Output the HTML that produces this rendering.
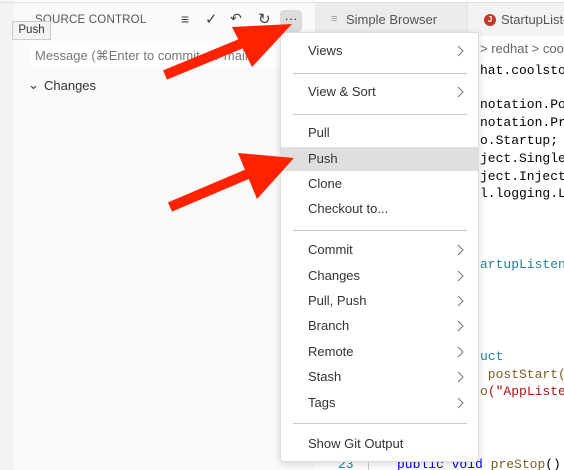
<!DOCTYPE html>
<html><head><meta charset="utf-8"><style>
*{margin:0;padding:0;box-sizing:border-box}
html,body{width:564px;height:470px;overflow:hidden}
body{background:#fff;font-family:"Liberation Sans",sans-serif;position:relative}
.abs{position:absolute;white-space:nowrap}
.mono{font-family:"Liberation Mono",monospace;font-size:13px;color:#000}
.mi{position:absolute;left:0;width:197px;height:24px;line-height:24px;padding-left:27px;font-size:13px;color:#333}
.mi svg{position:absolute;right:14px;top:6px}
.sep{position:absolute;left:12px;width:174px;height:1px;background:#ccc}
</style></head><body>
<svg width="0" height="0" style="position:absolute"><defs><symbol id="ch" viewBox="0 0 8 12"><polyline points="2,1 7,6 2,11" fill="none" stroke="#777" stroke-width="1"/></symbol></defs></svg>
<div class="abs" style="left:0;top:0;width:14px;height:470px;background:#f3f3f3"></div>
<div class="abs" style="left:14px;top:0;width:301px;height:470px;background:#fafafa"></div>
<div class="abs" style="left:0;top:2px;width:564px;height:1px;background:#e0e0e0"></div>
<div class="abs" style="left:35px;top:14px;font-size:11.5px;color:#555;letter-spacing:.2px">SOURCE CONTROL</div>
<div class="abs" style="left:181px;top:11px;font-size:14px;color:#444">&#8801;</div>
<div class="abs" style="left:205px;top:10px;font-size:15px;color:#444">&#10003;</div>
<div class="abs" style="left:230px;top:10px;font-size:14px;color:#444">&#8630;</div>
<div class="abs" style="left:258px;top:10px;font-size:15px;color:#444">&#8635;</div>
<div class="abs" style="left:280px;top:10px;width:22px;height:22px;background:#dcdcdc;border-radius:4px;font-size:13px;color:#333;text-align:center;line-height:18px">&middot;&middot;&middot;</div>
<div class="abs" style="left:12px;top:21px;width:39px;height:19px;background:#f3f3f3;border:1px solid #ccc;font-size:11.5px;color:#333;line-height:17px;text-align:center">Push</div>
<div class="abs" style="left:31px;top:43px;width:250px;height:25px;background:#fff"></div>
<div class="abs" style="left:35px;top:48px;font-size:13px;color:#777">Message (&#8984;Enter to commit on 'main')</div>
<div class="abs" style="left:28px;top:77px;font-size:13px;color:#333">&#8964;</div>
<div class="abs" style="left:44px;top:78px;font-size:13px;color:#333">Changes</div>
<div class="abs" style="left:315px;top:3px;width:249px;height:33px;background:#f3f3f3"></div>
<div class="abs" style="left:315px;top:3px;width:153px;height:33px;background:#ececec;border-right:1px solid #e0e0e0"></div>
<div class="abs" style="left:331px;top:13px;font-size:11px;color:#999">&#8801;</div>
<div class="abs" style="left:346px;top:12px;font-size:13px;color:#555">Simple Browser</div>
<div class="abs" style="left:484px;top:14px;width:12px;height:12px;border-radius:50%;background:#c0392b;color:#fff;font-size:8px;text-align:center;line-height:12px;font-weight:bold">J</div>
<div class="abs" style="left:501px;top:12px;font-size:13px;color:#555">StartupListener</div>
<div class="abs" style="left:480px;top:41px;font-size:13px;color:#666">&gt; redhat &gt; coolstore</div>
<div class="abs mono" style="left:480px;top:63px">hat.coolstore</div>
<div class="abs mono" style="left:480px;top:97px">notation.PostConstruct;</div>
<div class="abs mono" style="left:480px;top:115px">notation.PreDestroy;</div>
<div class="abs mono" style="left:480px;top:133px">o.Startup;</div>
<div class="abs mono" style="left:480px;top:151px">ject.Singleton;</div>
<div class="abs mono" style="left:480px;top:169px">ject.Inject;</div>
<div class="abs mono" style="left:480px;top:186px">l.logging.Logger;</div>
<div class="abs mono" style="left:480px;top:257px;color:#267f99">artupListener</div>
<div class="abs mono" style="left:480px;top:349px;color:#267f99">uct</div>
<div class="abs mono" style="left:480px;top:367px;color:#795e26">&nbsp;postStart()</div>
<div class="abs mono" style="left:480px;top:384px;color:#a31515"><span style="color:#795e26">o</span>("AppListener</div>
<div class="abs mono" style="left:338px;top:457px;color:#237893">23</div>
<div class="abs" style="left:368px;top:455px;width:1px;height:15px;background:#ccc"></div>
<div class="abs mono" style="left:397px;top:457px"><span style="color:#0000ff">public void</span> <span style="color:#795e26">preStop</span>() {</div>
<div class="abs" style="left:280px;top:32px;width:199px;height:430px;background:#fff;border:1px solid #ddd;box-shadow:0 2px 8px rgba(0,0,0,.15);border-radius:0 0 4px 4px">
 <div class="mi" style="top:6px">Views<svg width="8" height="12"><use href="#ch"/></svg></div>
 <div class="sep" style="top:40px"></div>
 <div class="mi" style="top:47px">View &amp; Sort<svg width="8" height="12"><use href="#ch"/></svg></div>
 <div class="sep" style="top:81px"></div>
 <div class="mi" style="top:88px">Pull</div>
 <div class="mi" style="top:114px;background:#e1dfdd">Push</div>
 <div class="mi" style="top:139px">Clone</div>
 <div class="mi" style="top:164px">Checkout to...</div>
 <div class="sep" style="top:197px"></div>
 <div class="mi" style="top:205px">Commit<svg width="8" height="12"><use href="#ch"/></svg></div>
 <div class="mi" style="top:231px">Changes<svg width="8" height="12"><use href="#ch"/></svg></div>
 <div class="mi" style="top:256px">Pull, Push<svg width="8" height="12"><use href="#ch"/></svg></div>
 <div class="mi" style="top:281px">Branch<svg width="8" height="12"><use href="#ch"/></svg></div>
 <div class="mi" style="top:307px">Remote<svg width="8" height="12"><use href="#ch"/></svg></div>
 <div class="mi" style="top:332px">Stash<svg width="8" height="12"><use href="#ch"/></svg></div>
 <div class="mi" style="top:358px">Tags<svg width="8" height="12"><use href="#ch"/></svg></div>
 <div class="sep" style="top:390px"></div>
 <div class="mi" style="top:399px">Show Git Output</div>
</div>
<svg class="abs" style="left:0;top:0" width="564" height="470">
 <line x1="165" y1="75" x2="245" y2="42" stroke="#ff2200" stroke-width="10"/>
 <polygon points="292,24 232,27 252,67" fill="#ff2200"/>
 <line x1="170" y1="207" x2="250" y2="173" stroke="#ff2200" stroke-width="10"/>
 <polygon points="294,158 238,153 257,199" fill="#ff2200"/>
</svg>
</body></html>
